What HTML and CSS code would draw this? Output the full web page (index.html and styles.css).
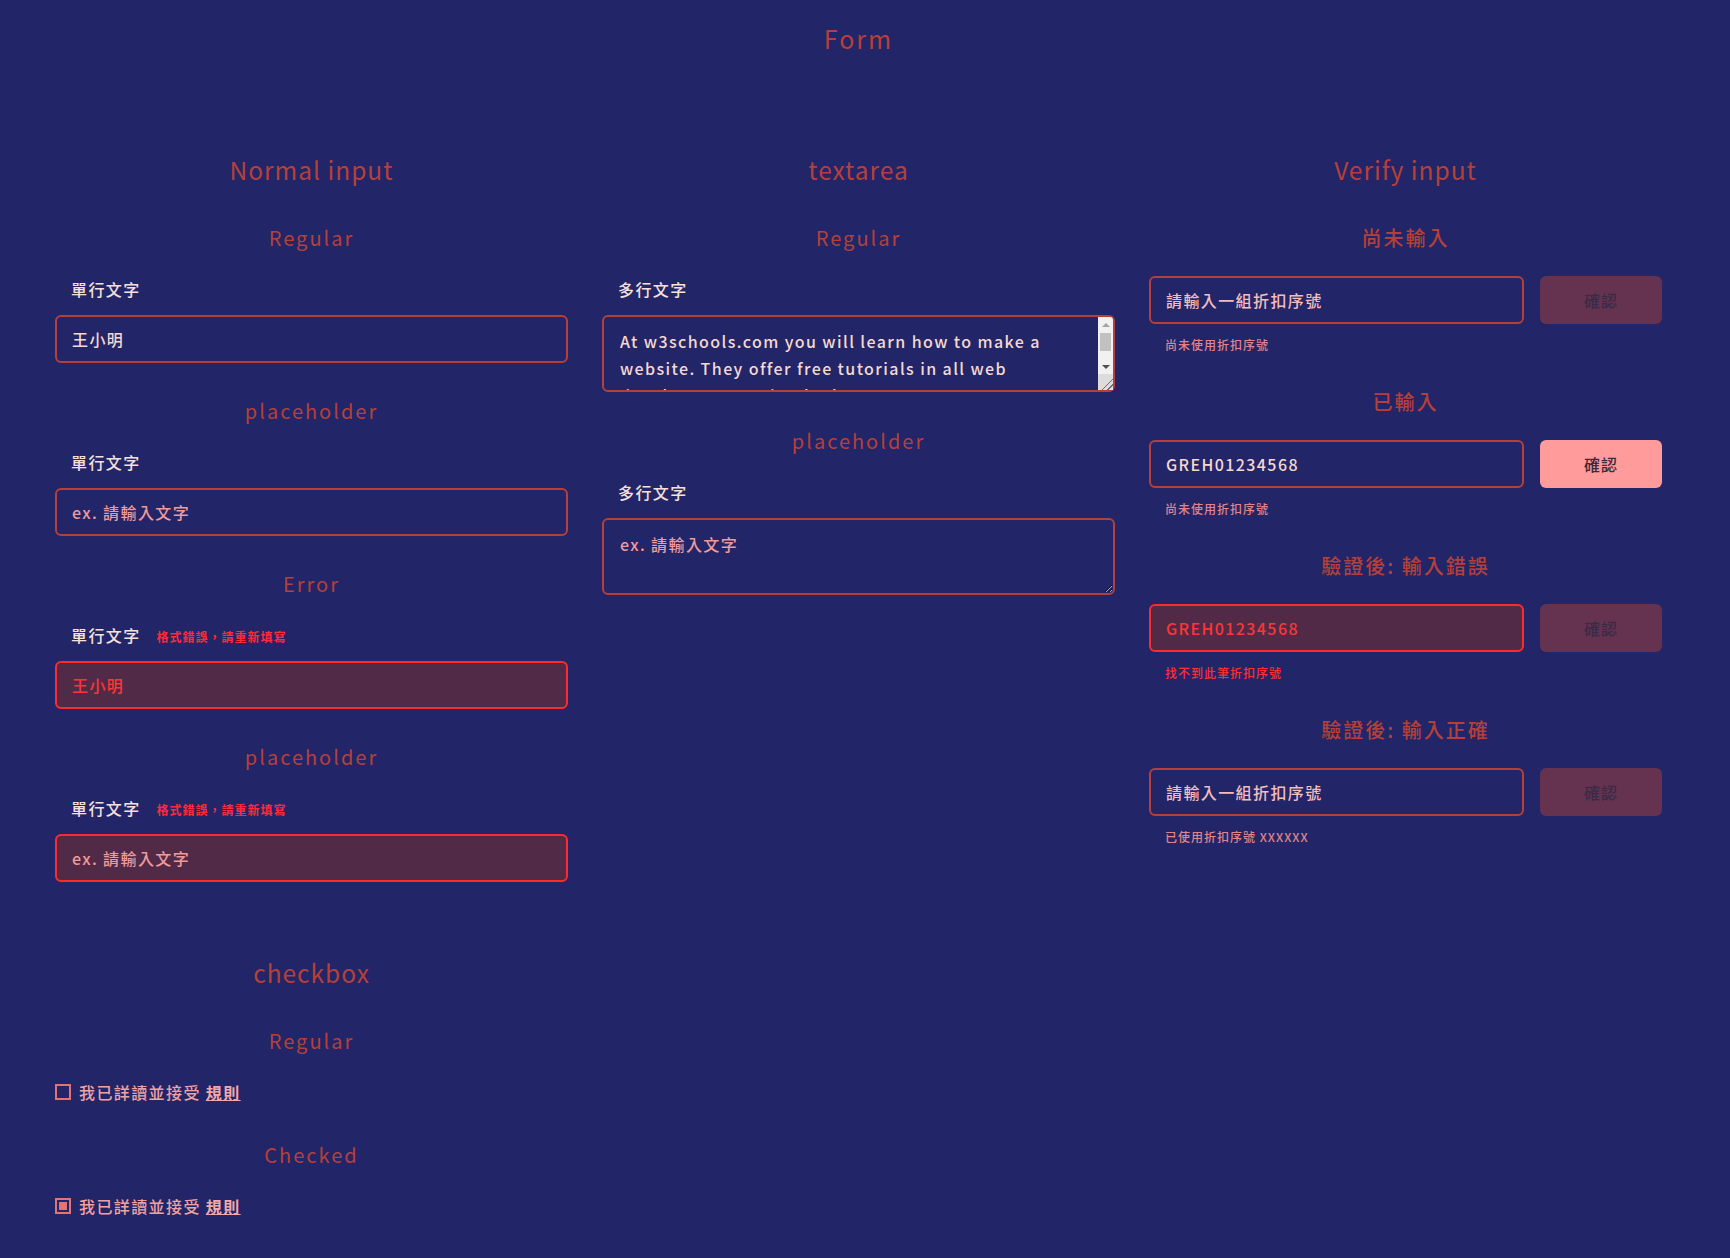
FILE: index.html
```html
<!DOCTYPE html>
<html lang="zh-Hant">
<head>
<meta charset="utf-8">
<title>Form</title>
<link rel="stylesheet" href="styles.css">
</head>
<body>
<main class="page">
  <h1 class="page-title">Form</h1>
  <div class="columns">
    <section class="col">
      <h2 class="col-title">Normal input</h2>
      <div class="group">
        <h3 class="sub">Regular</h3>
        <label class="field-label">單行文字</label>
        <input class="field" type="text" value="王小明">
      </div>
      <div class="group">
        <h3 class="sub">placeholder</h3>
        <label class="field-label">單行文字</label>
        <input class="field" type="text" placeholder="ex. 請輸入文字">
      </div>
      <div class="group">
        <h3 class="sub">Error</h3>
        <label class="field-label">單行文字<span class="err-msg">格式錯誤，請重新填寫</span></label>
        <input class="field is-error" type="text" value="王小明">
      </div>
      <div class="group group-last">
        <h3 class="sub">placeholder</h3>
        <label class="field-label">單行文字<span class="err-msg">格式錯誤，請重新填寫</span></label>
        <input class="field is-error" type="text" placeholder="ex. 請輸入文字">
      </div>

      <h2 class="col-title checkbox-title">checkbox</h2>
      <h3 class="sub">Regular</h3>
      <label class="check-row">
        <input class="check" type="checkbox">
        <span>我已詳讀並接受 <a class="rule-link" href="#">規則</a></span>
      </label>
      <h3 class="sub sub-checked">Checked</h3>
      <label class="check-row">
        <input class="check" type="checkbox" checked>
        <span>我已詳讀並接受 <a class="rule-link" href="#">規則</a></span>
      </label>
    </section>

    <section class="col">
      <h2 class="col-title">textarea</h2>
      <div class="group group-area">
        <h3 class="sub">Regular</h3>
        <label class="field-label">多行文字</label>
        <div class="area-wrap">
          <textarea class="field area area-scroll">At w3schools.com you will learn how to make a website. They offer free tutorials in all web development technologies.</textarea>
          <div class="fake-scroll" aria-hidden="true">
            <span class="sb-btn sb-up"></span>
            <span class="sb-track"><span class="sb-thumb"></span></span>
            <span class="sb-btn sb-down"></span>
            <span class="sb-corner"></span>
          </div>
        </div>
      </div>
      <div class="group group-area">
        <h3 class="sub">placeholder</h3>
        <label class="field-label">多行文字</label>
        <textarea class="field area" placeholder="ex. 請輸入文字"></textarea>
      </div>
    </section>

    <section class="col">
      <h2 class="col-title">Verify input</h2>
      <div class="vgroup">
        <h3 class="sub sub-verify">尚未輸入</h3>
        <div class="verify-row">
          <input class="field code" type="text" placeholder="請輸入一組折扣序號">
          <button class="btn" type="button">確認</button>
        </div>
        <p class="hint">尚未使用折扣序號</p>
      </div>
      <div class="vgroup">
        <h3 class="sub sub-verify">已輸入</h3>
        <div class="verify-row">
          <input class="field code" type="text" value="GREH01234568">
          <button class="btn is-active" type="button">確認</button>
        </div>
        <p class="hint">尚未使用折扣序號</p>
      </div>
      <div class="vgroup">
        <h3 class="sub sub-verify">驗證後: 輸入錯誤</h3>
        <div class="verify-row">
          <input class="field code is-error" type="text" value="GREH01234568">
          <button class="btn" type="button">確認</button>
        </div>
        <p class="hint is-error">找不到此筆折扣序號</p>
      </div>
      <div class="vgroup">
        <h3 class="sub sub-verify">驗證後: 輸入正確</h3>
        <div class="verify-row">
          <input class="field code" type="text" placeholder="請輸入一組折扣序號">
          <button class="btn" type="button">確認</button>
        </div>
        <p class="hint">已使用折扣序號 XXXXXX</p>
      </div>
    </section>
  </div>
</main>
</body>
</html>
```

FILE: styles.css
```css
html, body {
  margin: 0;
  padding: 0;
}

body {
  background: #222567;
  font-family: "Noto Sans CJK TC", "Noto Sans", sans-serif;
  color: #f5dcd6;
}

.page {
  width: 1607px;
  margin-left: 55px;
  padding-top: 18px;
}

.page-title {
  margin: 0;
  text-align: center;
  font-size: 25px;
  line-height: 40px;
  font-weight: 400;
  letter-spacing: 2px;
  color: #b5403a;
}

.columns {
  display: grid;
  grid-template-columns: repeat(3, 513px);
  column-gap: 34px;
  margin-top: 92px;
  align-items: start;
}

.col-title {
  margin: 0 0 33px;
  text-align: center;
  font-size: 24.5px;
  line-height: 40px;
  font-weight: 400;
  letter-spacing: 1px;
  color: #b5403a;
}

.checkbox-title {
  margin-top: 71px;
}

.sub {
  margin: 0 0 24px;
  text-align: center;
  font-size: 20px;
  line-height: 30px;
  font-weight: 400;
  letter-spacing: 2px;
  color: #b5403a;
}

.sub-checked {
  margin-top: 36px;
}

.sub-verify {
  margin-bottom: 23px;
  font-weight: 500;
}

.group {
  margin-bottom: 33px;
}

.group-last {
  margin-bottom: 0;
}

.group-area {
  margin-bottom: 34px;
}

.field-label {
  display: block;
  height: 24px;
  padding-left: 16px;
  margin-bottom: 14px;
  font-size: 16px;
  line-height: 24px;
  font-weight: 500;
  letter-spacing: 1.4px;
  color: #f6e0dc;
  overflow: hidden;
}

.err-msg {
  margin-left: 16px;
  font-size: 12px;
  line-height: 1;
  font-weight: 700;
  letter-spacing: 1px;
  color: #ff2a3a;
}

.field {
  display: block;
  box-sizing: border-box;
  width: 100%;
  height: 48px;
  margin: 0;
  padding: 0 15px;
  border: 2px solid #b5403a;
  border-radius: 6px;
  background: transparent;
  color: #f5d8d0;
  font-family: "Noto Sans CJK TC", "Noto Sans", sans-serif;
  font-size: 16px;
  font-weight: 500;
  letter-spacing: 1.4px;
  outline: none;
}

.field::placeholder {
  color: #f09a9a;
  opacity: 1;
}

.field.is-error {
  border-color: #ff2b2b;
  background: #512a48;
  color: #ff3535;
}

.area {
  height: 77px;
  padding: 11px 16px;
  line-height: 27px;
}

.area-wrap {
  position: relative;
}

.area-scroll {
  overflow: hidden;
  padding-right: 31px;
}

.fake-scroll {
  position: absolute;
  top: 2px;
  right: 2px;
  bottom: 2px;
  width: 15px;
  display: flex;
  flex-direction: column;
  background: #f1f1f1;
  border-top-right-radius: 3px;
  pointer-events: none;
}

.sb-btn {
  position: relative;
  flex: none;
  height: 15px;
}

.sb-btn::before {
  content: "";
  position: absolute;
  left: 50%;
  top: 50%;
  width: 0;
  height: 0;
  margin-left: -4px;
  margin-top: -2px;
  border-left: 4px solid transparent;
  border-right: 4px solid transparent;
}

.sb-up::before {
  border-bottom: 4px solid #a3a3a3;
}

.sb-down::before {
  border-top: 4px solid #505050;
}

.sb-track {
  flex: 1;
  padding: 1px 2px 0;
}

.sb-thumb {
  display: block;
  height: 18px;
  background: #c1c1c1;
}

.sb-corner {
  flex: none;
  height: 16px;
  background-color: #dcdcdc;
  background-image: linear-gradient(135deg, transparent 62%, #6d6d6d 62% 67%, transparent 67% 79%, #6d6d6d 79% 84%, transparent 84%);
  border-bottom-right-radius: 3px;
}

.check-row {
  display: flex;
  align-items: center;
  gap: 8px;
  font-size: 16px;
  line-height: 24px;
  font-weight: 500;
  letter-spacing: 1.4px;
  color: #f0a2a2;
}

.check {
  -webkit-appearance: none;
  appearance: none;
  box-sizing: border-box;
  width: 16px;
  height: 16px;
  margin: 0;
  border: 2px solid #e57373;
  background: transparent;
}

.check:checked {
  background: #e57373;
  box-shadow: inset 0 0 0 2px #222567;
}

.rule-link {
  color: #f5a8a8;
  font-weight: 700;
  text-decoration: underline;
}

.vgroup {
  margin-bottom: 33px;
}

.verify-row {
  display: flex;
  gap: 16px;
}

.verify-row .field {
  flex: 1;
}

.code::placeholder {
  color: #f2bdbb;
}

.btn {
  flex: none;
  width: 122px;
  height: 48px;
  border: none;
  border-radius: 6px;
  background: #65324f;
  color: #3a2b48;
  font-family: "Noto Sans CJK TC", "Noto Sans", sans-serif;
  font-size: 16px;
  font-weight: 500;
  letter-spacing: 1px;
}

.btn.is-active {
  background: #ff9b9b;
  color: #3a2a3a;
}

.hint {
  margin: 12px 0 0;
  padding-left: 16px;
  font-size: 12px;
  line-height: 18px;
  font-weight: 500;
  letter-spacing: 1px;
  color: #e0858c;
}

.hint.is-error {
  color: #ff3030;
}
```
